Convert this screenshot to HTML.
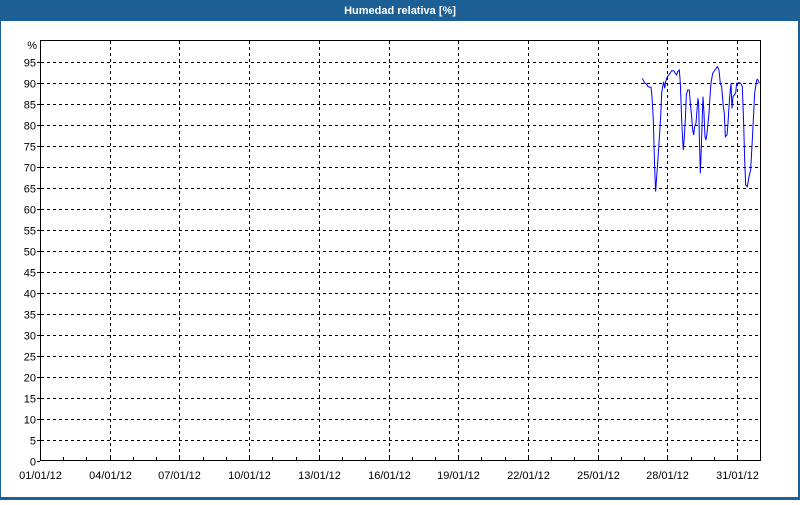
<!DOCTYPE html>
<html><head><style>
body{margin:0;width:800px;height:500px;overflow:hidden;background:#fff;font-family:"Liberation Sans",Tahoma,sans-serif}
</style></head><body>
<svg width="800" height="500" xmlns="http://www.w3.org/2000/svg" font-family="Liberation Sans, sans-serif" font-size="11">
<rect x="0" y="0" width="800" height="500" fill="#1c5f95"/>
<rect x="1" y="21" width="797" height="476" fill="#fff"/>
<text x="400" y="14" fill="#fff" font-weight="bold" font-size="11" text-anchor="middle">Humedad relativa [%]</text>
<g id="grid" stroke="#000" stroke-width="1" stroke-dasharray="3,3" shape-rendering="crispEdges"></g>
<g id="labels" fill="#000"></g>
<rect x="40.5" y="40.5" width="720" height="420" fill="none" stroke="#000" shape-rendering="crispEdges"/>
<text x="37" y="49" text-anchor="end">%</text>
<g transform="translate(620,40) scale(0.3333)">
<polyline fill="none" stroke="#0000ff" stroke-width="1" vector-effect="non-scaling-stroke" points="67,115 72,125 75,130 80,132 84,140 93,142 96,170 100,240 103,350 105,410 107,455 110,410 113,370 117,310 122,230 125,160 128,140 131,125 134,145 137,125 142,110 150,100 155,92 162,93 166,100 170,105 173,95 178,90 181,130 185,240 188,300 190,330 193,290 196,240 199,165 203,150 208,150 211,190 215,230 218,270 221,285 224,260 228,250 231,210 234,175 236,190 238,290 241,400 243,350 246,260 249,170 252,220 255,290 258,300 261,280 264,250 267,220 270,170 273,130 278,100 285,90 292,80 297,90 301,130 305,140 310,200 313,220 316,290 321,285 324,250 327,200 330,160 333,130 336,205 339,170 343,165 347,160 350,130 356,128 362,130 367,140 371,250 374,360 377,435 382,440 387,410 392,390 397,300 400,240 404,160 407,140 410,120 413,118 418,130"/>
</g>
</svg>
<script>
var ns="http://www.w3.org/2000/svg",g=document.getElementById('grid'),L=document.getElementById('labels');
function el(p,t,a,txt){var e=document.createElementNS(ns,t);for(var k in a)e.setAttribute(k,a[k]);if(txt)e.textContent=txt;p.appendChild(e);return e;}
var svg=document.querySelector('svg');
for(var v=0;v<=95;v+=5){var y=Math.round(461-v*4.2)+0.5;
 if(v>0)el(g,'line',{x1:41,x2:760,y1:y,y2:y});
 el(svg,'line',{x1:37,x2:40,y1:y,y2:y,stroke:'#000','shape-rendering':'crispEdges'});
 el(L,'text',{x:36,y:y+4,'text-anchor':'end'},String(v));}
var d=['01','04','07','10','13','16','19','22','25','28','31'];
for(var k=0;k<=30;k++){var x=Math.round(40+k*69.7/3)+0.5;
 el(svg,'line',{x1:x,x2:x,y1:457,y2:461,stroke:'#000','shape-rendering':'crispEdges'});
 if(k%3==0){var i=k/3; if(i>0)el(g,'line',{x1:x,x2:x,y1:41,y2:460});
 el(L,'text',{x:x,y:479,'text-anchor':'middle'},d[i]+'/01/12');}}
</script>
</body></html>
